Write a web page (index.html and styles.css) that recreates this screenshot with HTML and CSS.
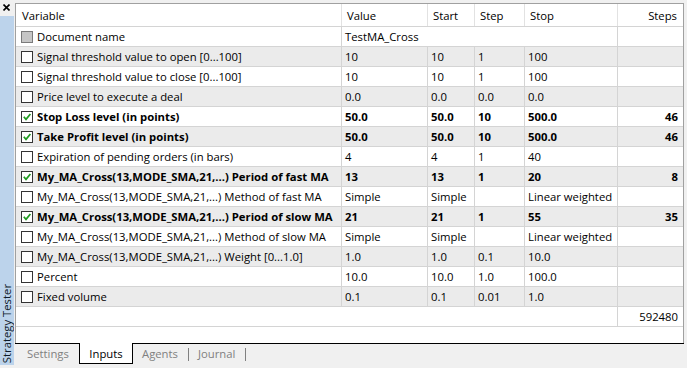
FILE: index.html
```html
<!DOCTYPE html>
<html lang="en">
<head>
    <meta charset="UTF-8">
    <title>Strategy Tester - Inputs</title>
    <link rel="stylesheet" href="styles.css">
</head>
<body>
    <div class="window">
        <aside class="sidebar">
            <span class="close-btn">
                <svg width="7" height="7" viewBox="0 0 7 7"><path d="M0.5 0.5 L6.5 6.5 M6.5 0.5 L0.5 6.5" stroke="#000" stroke-width="1.6"/></svg>
            </span>
            <div class="sidebar-bar"><span class="sidebar-title">Strategy Tester</span></div>
        </aside>

        <main class="panel">
            <div class="grid">
                <div class="row head">
                    <div class="cell first">Variable</div>
                    <div class="cell">Value</div>
                    <div class="cell">Start</div>
                    <div class="cell">Step</div>
                    <div class="cell">Stop</div>
                    <div class="cell num">Steps</div>
                </div>

                <div class="row">
                    <div class="cell first"><span class="check disabled"></span>Document name</div>
                    <div class="cell span4">TestMA_Cross</div>
                    <div class="cell num"></div>
                </div>
                <div class="row alt">
                    <div class="cell first"><span class="check"></span>Signal threshold value to open [0...100]</div>
                    <div class="cell">10</div>
                    <div class="cell">10</div>
                    <div class="cell">1</div>
                    <div class="cell">100</div>
                    <div class="cell num"></div>
                </div>
                <div class="row">
                    <div class="cell first"><span class="check"></span>Signal threshold value to close [0...100]</div>
                    <div class="cell">10</div>
                    <div class="cell">10</div>
                    <div class="cell">1</div>
                    <div class="cell">100</div>
                    <div class="cell num"></div>
                </div>
                <div class="row alt">
                    <div class="cell first"><span class="check"></span>Price level to execute a deal</div>
                    <div class="cell">0.0</div>
                    <div class="cell">0.0</div>
                    <div class="cell">0.0</div>
                    <div class="cell">0.0</div>
                    <div class="cell num"></div>
                </div>
                <div class="row bold">
                    <div class="cell first"><span class="check checked"><svg viewBox="0 0 10 10"><path d="M1.8 4.8 L4 7.4 L8.4 2" fill="none" stroke="#1f9a1f" stroke-width="1.7"/></svg></span>Stop Loss level (in points)</div>
                    <div class="cell">50.0</div>
                    <div class="cell">50.0</div>
                    <div class="cell">10</div>
                    <div class="cell">500.0</div>
                    <div class="cell num">46</div>
                </div>
                <div class="row alt bold">
                    <div class="cell first"><span class="check checked"><svg viewBox="0 0 10 10"><path d="M1.8 4.8 L4 7.4 L8.4 2" fill="none" stroke="#1f9a1f" stroke-width="1.7"/></svg></span>Take Profit level (in points)</div>
                    <div class="cell">50.0</div>
                    <div class="cell">50.0</div>
                    <div class="cell">10</div>
                    <div class="cell">500.0</div>
                    <div class="cell num">46</div>
                </div>
                <div class="row">
                    <div class="cell first"><span class="check"></span>Expiration of pending orders (in bars)</div>
                    <div class="cell">4</div>
                    <div class="cell">4</div>
                    <div class="cell">1</div>
                    <div class="cell">40</div>
                    <div class="cell num"></div>
                </div>
                <div class="row alt bold">
                    <div class="cell first"><span class="check checked"><svg viewBox="0 0 10 10"><path d="M1.8 4.8 L4 7.4 L8.4 2" fill="none" stroke="#1f9a1f" stroke-width="1.7"/></svg></span>My_MA_Cross(13,MODE_SMA,21,...) Period of fast MA</div>
                    <div class="cell">13</div>
                    <div class="cell">13</div>
                    <div class="cell">1</div>
                    <div class="cell">20</div>
                    <div class="cell num">8</div>
                </div>
                <div class="row">
                    <div class="cell first"><span class="check"></span>My_MA_Cross(13,MODE_SMA,21,...) Method of fast MA</div>
                    <div class="cell">Simple</div>
                    <div class="cell">Simple</div>
                    <div class="cell"></div>
                    <div class="cell">Linear weighted</div>
                    <div class="cell num"></div>
                </div>
                <div class="row alt bold">
                    <div class="cell first"><span class="check checked"><svg viewBox="0 0 10 10"><path d="M1.8 4.8 L4 7.4 L8.4 2" fill="none" stroke="#1f9a1f" stroke-width="1.7"/></svg></span>My_MA_Cross(13,MODE_SMA,21,...) Period of slow MA</div>
                    <div class="cell">21</div>
                    <div class="cell">21</div>
                    <div class="cell">1</div>
                    <div class="cell">55</div>
                    <div class="cell num">35</div>
                </div>
                <div class="row">
                    <div class="cell first"><span class="check"></span>My_MA_Cross(13,MODE_SMA,21,...) Method of slow MA</div>
                    <div class="cell">Simple</div>
                    <div class="cell">Simple</div>
                    <div class="cell"></div>
                    <div class="cell">Linear weighted</div>
                    <div class="cell num"></div>
                </div>
                <div class="row alt">
                    <div class="cell first"><span class="check"></span>My_MA_Cross(13,MODE_SMA,21,...) Weight [0...1.0]</div>
                    <div class="cell">1.0</div>
                    <div class="cell">1.0</div>
                    <div class="cell">0.1</div>
                    <div class="cell">10.0</div>
                    <div class="cell num"></div>
                </div>
                <div class="row">
                    <div class="cell first"><span class="check"></span>Percent</div>
                    <div class="cell">10.0</div>
                    <div class="cell">10.0</div>
                    <div class="cell">1.0</div>
                    <div class="cell">100.0</div>
                    <div class="cell num"></div>
                </div>
                <div class="row alt">
                    <div class="cell first"><span class="check"></span>Fixed volume</div>
                    <div class="cell">0.1</div>
                    <div class="cell">0.1</div>
                    <div class="cell">0.01</div>
                    <div class="cell">1.0</div>
                    <div class="cell num"></div>
                </div>

                <!-- Total number of passes -->
                <div class="row">
                    <div class="cell span5"></div>
                    <div class="cell num">592480</div>
                </div>
            </div>

            <div class="tabs">
                <span class="tab tab-settings">Settings</span>
                <span class="tab active">Inputs</span>
                <span class="tab">Agents</span>
                <span class="tab-sep"></span>
                <span class="tab">Journal</span>
                <span class="tab-sep"></span>
            </div>
        </main>
    </div>
</body>
</html>
```

FILE: styles.css
```css
body {
    margin: 0;
    background-color: #f0f0f0;
    font-family: "Open Sans", "Noto Sans", sans-serif;
    font-size: 11.3px;
    color: #000;
}

.window {
    display: flex;
    width: 687px;
    height: 368px;
}

/* Left docking bar */
.sidebar {
    width: 15px;
    display: flex;
    flex-direction: column;
}

.close-btn {
    height: 16px;
    padding: 4px 0 0 3px;
    box-sizing: border-box;
    display: flex;
}

.sidebar-bar {
    width: 14px;
    flex: 1;
    margin-bottom: 3px;
    background-color: #bcd3eb;
    display: flex;
    align-items: flex-end;
    justify-content: center;
}

.sidebar-title {
    writing-mode: vertical-rl;
    transform: rotate(180deg);
    line-height: 14px;
    padding-top: 2px;
    color: #0e1a2a;
}

/* Main panel */
.panel {
    flex: 1;
    padding: 3px 3px 0 0;
    display: flex;
    flex-direction: column;
}

.grid {
    flex: 1;
    background: #fff;
    border: 1px solid #a0a0a0;
    border-bottom: none;
}

.row {
    display: grid;
    grid-template-columns: 325px 86px 47px 50px 93px 66px;
    height: 20px;
    box-sizing: border-box;
    border-bottom: 1px solid #d4d4d4;
}

.row.alt {
    background-color: #ebebeb;
}

.row.bold {
    font-weight: bold;
}

.row.head {
    height: 23px;
    background: #fff;
}

.cell {
    display: flex;
    align-items: center;
    padding: 0 3px;
    border-left: 1px solid #d4d4d4;
    white-space: nowrap;
    overflow: hidden;
}

.cell.first {
    border-left: none;
    padding-left: 5px;
}

.cell.num {
    justify-content: flex-end;
    padding-right: 5px;
}

.cell.span4 {
    grid-column: span 4;
}

.cell.span5 {
    grid-column: span 5;
    border-left: none;
}

.head .cell {
    padding-left: 5px;
    border-left-color: #e2e2e2;
}

.head .cell.first {
    padding-left: 6px;
}

.head .cell.num {
    padding-right: 6px;
}

/* Checkboxes */
.check {
    width: 12px;
    height: 12px;
    box-sizing: border-box;
    border: 1px solid #333;
    background: #fff;
    margin-right: 4px;
    flex-shrink: 0;
    display: flex;
}

.check svg {
    width: 10px;
    height: 10px;
}

.check.disabled {
    background: #c6c6c6;
    border-color: #7a7a7a;
}

/* Bottom tabs */
.tabs {
    height: 25px;
    box-sizing: border-box;
    border-top: 1px solid #000;
    display: flex;
    align-items: flex-start;
}

.tab {
    line-height: 19px;
    padding: 0 10px 0 9px;
    color: #808080;
}

.tab-settings {
    width: 64px;
    box-sizing: border-box;
    padding: 0 0 0 12px;
}

.tab.active {
    width: 54px;
    height: 21px;
    box-sizing: border-box;
    margin-top: -1px;
    padding: 1px 0 0 0;
    text-align: center;
    color: #000;
    background: #fff;
    border: 1px solid #000;
    border-top: none;
}

.tab-sep {
    width: 1px;
    height: 13px;
    margin-top: 4px;
    background: #808080;
}
```
